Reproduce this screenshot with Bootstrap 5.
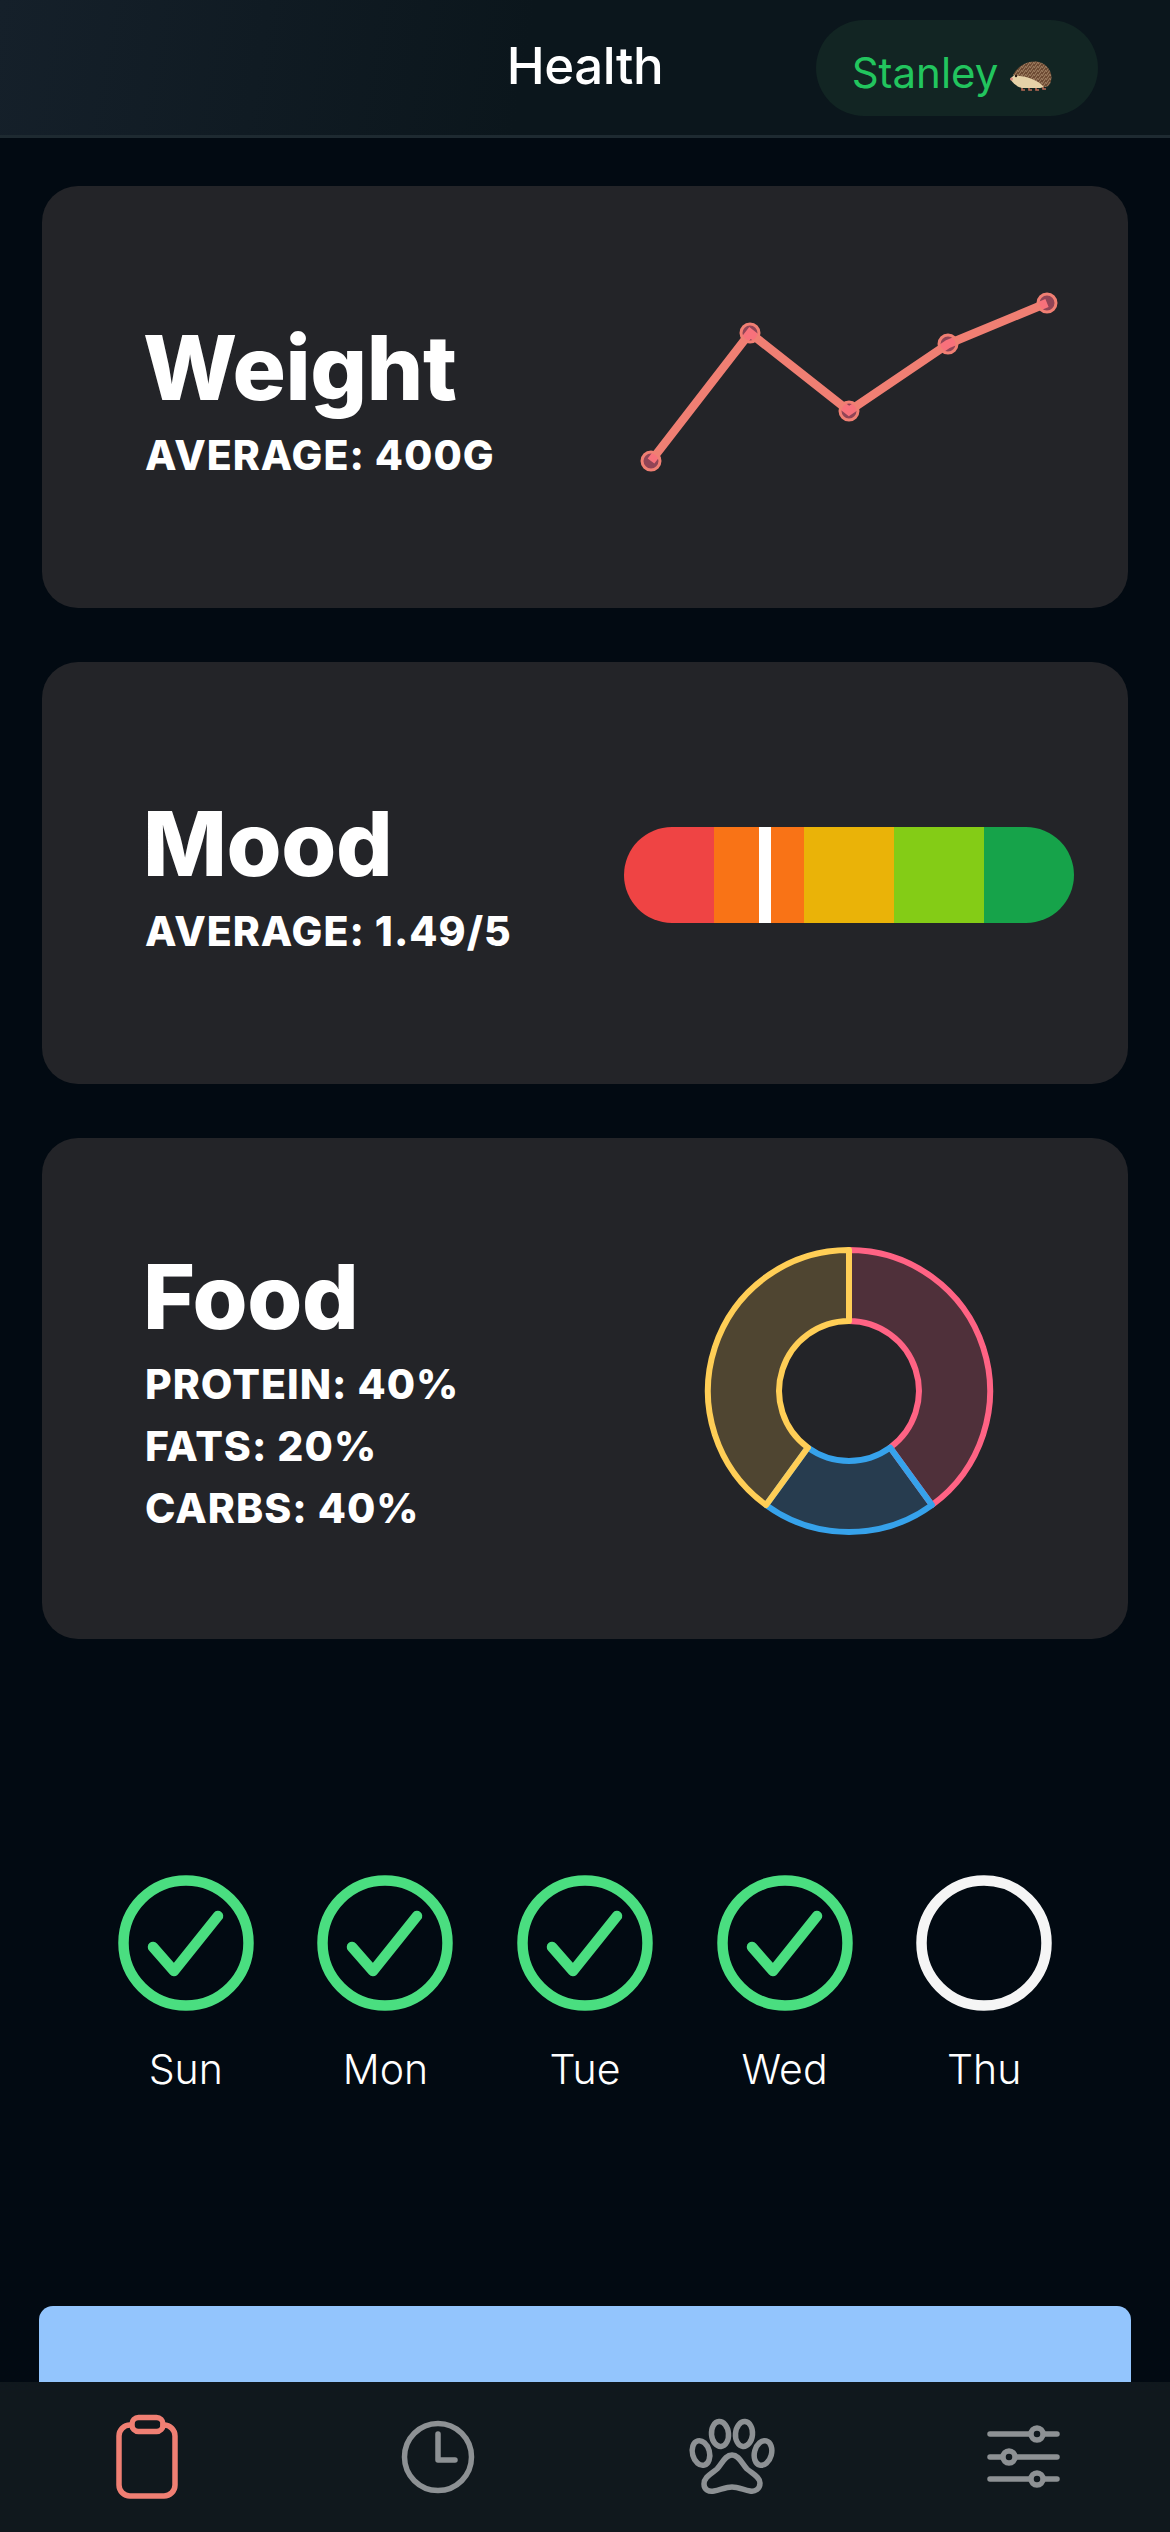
<!DOCTYPE html>
<html lang="en">
<head>
    <meta charset="UTF-8">
    <meta name="viewport" content="width=device-width, initial-scale=1.0">
    <title>Health</title>
    <link href="https://cdn.jsdelivr.net/npm/bootstrap@5.3.0/dist/css/bootstrap.min.css" rel="stylesheet">
    <style>
        html, body {
            height: 100%;
        }
        body {
            background-color: #020a12;
            color: #fff;
            font-family: Inter, "Liberation Sans", sans-serif;
        }
        .app-screen {
            height: 2532px;
            overflow: hidden;
        }
        .top-bar {
            display: grid;
            grid-template-columns: 1fr auto 1fr;
            align-items: center;
            height: 138px;
            padding-bottom: 7px;
            background: linear-gradient(100deg, #15202a 0%, #0b161c 45%, #0b161c 100%);
            border-bottom: 3px solid #1e2a31;
        }
        .top-title {
            grid-column: 2;
            font-size: 51px;
            font-weight: 500;
            line-height: 1;
            letter-spacing: -0.4px;
            margin-top: 2px;
        }
        .pet-pill {
            grid-column: 3;
            justify-self: end;
            width: 282px;
            height: 96px;
            margin-right: 72px;
            margin-top: 7px;
            padding-right: 10px;
            background-color: #122523;
            color: #22c55e;
            font-size: 42px;
            border-radius: 48px;
        }
        .pet-name {
            position: relative;
            top: 5px;
        }
        .stat-list {
            padding: 48px 42px 0;
        }
        .stat-card {
            background-color: #232428;
            border: 0;
            border-radius: 36px;
            height: 422px;
            padding-left: 103px;
            color: #fff;
        }
        .stat-card + .stat-card {
            margin-top: 54px;
        }
        .stat-card.stat-tall {
            height: 501px;
        }
        .stat-title {
            font-size: 89px;
            font-weight: 800;
            line-height: 97px;
            letter-spacing: -0.4px;
            margin: 10px 0 8px -2px;
        }
        .stat-line {
            font-size: 41px;
            font-weight: 800;
            line-height: 62px;
            text-transform: uppercase;
            letter-spacing: 1px;
        }
        .chart-box {
            width: 450px;
            margin-top: 4px;
            margin-right: 54px;
            flex-shrink: 0;
        }
        .chart-box svg {
            display: block;
        }
        .mood-scale {
            height: 96px;
            border-radius: 48px;
            overflow: hidden;
            position: relative;
        }
        .mood-step {
            flex: 1 1 0;
        }
        .mood-1 { background-color: #ef4444; }
        .mood-2 { background-color: #f97316; }
        .mood-3 { background-color: #eab308; }
        .mood-4 { background-color: #84cc16; }
        .mood-5 { background-color: #16a34a; }
        .mood-pointer {
            position: absolute;
            top: 0;
            bottom: 0;
            width: 12px;
            background-color: #fff;
        }
        .day-row {
            margin-top: 236px;
            padding: 0 86px;
        }
        .day-col {
            flex: 1 1 0;
            font-size: 41px;
            font-weight: 300;
            line-height: 1;
        }
        .day-col svg {
            display: block;
            margin-bottom: 38px;
        }
        .log-button {
            display: block;
            width: 1092px;
            height: 120px;
            margin: 216px 0 0 39px;
            background-color: #93c5fd;
            border: 0;
            border-radius: 14px;
        }
        .main-area {
            height: 2244px;
            overflow: hidden;
        }
        .tab-bar {
            height: 150px;
            background-color: #10181d;
            position: relative;
        }
        .tab-icon {
            position: absolute;
            top: 0;
        }
    </style>
</head>
<body>
    <div class="app-screen d-flex flex-column">
        <header class="top-bar">
            <div class="top-title">Health</div>
            <div class="pet-pill d-flex align-items-center justify-content-center gap-2">
                <span class="pet-name">Stanley</span>
                <!-- erizo -->
                <svg class="ms-1 mt-3" width="42" height="30" viewBox="0 0 42 30">
                    <defs>
                        <pattern id="spines" width="4" height="4" patternUnits="userSpaceOnUse">
                            <rect width="4" height="4" fill="#6d4a33"/>
                            <path d="M0 3 L2 0 M2 4 L4 1" stroke="#a98a6c" stroke-width="0.9"/>
                        </pattern>
                    </defs>
                    <path d="M12 26 v3 h3 M19 26 v3 h3 M26 26 v3 h3 M33 25 v3 h3" stroke="#b86b55" stroke-width="1.6" fill="none"/>
                    <path d="M1 17 C6 12 10 8 14 9 L34 14 C38 20 36 26 30 27 H12 C7 26 3 22 1 19 Z" fill="#e6d2a8"/>
                    <path d="M3 14 C9 3 20 -1 29 1 C39 4 43 13 41 20 C40 25 37 26 34 26 C28 19 16 15 9 15 Z" fill="url(#spines)"/>
                    <circle cx="6" cy="15" r="1.2" fill="#2a1a12"/>
                    <circle cx="1.5" cy="18" r="1.5" fill="#d98a80"/>
                </svg>
            </div>
        </header>

        <div class="main-area">
            <section class="stat-list">
                <div class="card stat-card flex-row align-items-center justify-content-between">
                    <div>
                        <h2 class="stat-title">Weight</h2>
                        <div class="stat-line">Average: 400g</div>
                    </div>
                    <div class="chart-box">
                        <svg width="450" height="220" viewBox="624 291 450 220">
                            <polyline points="651,463 750,335 849,413 948,346 1047,305" fill="none" stroke="#f07f73" stroke-width="8.5"/>
                            <g fill="rgba(255,99,132,.5)" stroke="#f07f73" stroke-width="3">
                                <circle cx="651" cy="463" r="9"/>
                                <circle cx="750" cy="335" r="9"/>
                                <circle cx="849" cy="413" r="9"/>
                                <circle cx="948" cy="346" r="9"/>
                                <circle cx="1047" cy="305" r="9"/>
                            </g>
                        </svg>
                    </div>
                </div>

                <div class="card stat-card flex-row align-items-center justify-content-between">
                    <div>
                        <h2 class="stat-title">Mood</h2>
                        <div class="stat-line">Average: 1.49/5</div>
                    </div>
                    <div class="chart-box">
                        <div class="mood-scale d-flex">
                            <div class="mood-step mood-1"></div>
                            <div class="mood-step mood-2"></div>
                            <div class="mood-step mood-3"></div>
                            <div class="mood-step mood-4"></div>
                            <div class="mood-step mood-5"></div>
                            <div class="mood-pointer" style="left: 135px"></div>
                        </div>
                    </div>
                </div>

                <div class="card stat-card stat-tall flex-row align-items-center justify-content-between">
                    <div>
                        <h2 class="stat-title">Food</h2>
                        <div class="stat-line">Protein: 40%</div>
                        <div class="stat-line">Fats: 20%</div>
                        <div class="stat-line">Carbs: 40%</div>
                    </div>
                    <div class="chart-box">
                        <svg class="mx-auto" width="300" height="300" viewBox="-150 -150 300 300" stroke-width="6" stroke-linejoin="round">
                            <path d="M0 -141 A141 141 0 0 1 82.9 114.1 L41.1 56.6 A70 70 0 0 0 0 -70 Z" fill="rgba(255,99,132,.2)" stroke="#ff6384"/>
                            <path d="M82.9 114.1 A141 141 0 0 1 -82.9 114.1 L-41.1 56.6 A70 70 0 0 0 41.1 56.6 Z" fill="rgba(54,162,235,.2)" stroke="#36a2eb"/>
                            <path d="M-82.9 114.1 A141 141 0 0 1 0 -141 L0 -70 A70 70 0 0 0 -41.1 56.6 Z" fill="rgba(255,206,86,.2)" stroke="#ffce56"/>
                        </svg>
                    </div>
                </div>
            </section>

            <section class="day-row d-flex">
                <div class="day-col d-flex flex-column align-items-center">
                    <svg width="136" height="136" viewBox="-68 -68 136 136" fill="none" stroke="#4ade80" stroke-width="10.5" stroke-linecap="round" stroke-linejoin="round"><circle r="62.5"/><path d="M-33 4 L-12 28 L32 -27"/></svg>
                    <span>Sun</span>
                </div>
                <div class="day-col d-flex flex-column align-items-center">
                    <svg width="136" height="136" viewBox="-68 -68 136 136" fill="none" stroke="#4ade80" stroke-width="10.5" stroke-linecap="round" stroke-linejoin="round"><circle r="62.5"/><path d="M-33 4 L-12 28 L32 -27"/></svg>
                    <span>Mon</span>
                </div>
                <div class="day-col d-flex flex-column align-items-center">
                    <svg width="136" height="136" viewBox="-68 -68 136 136" fill="none" stroke="#4ade80" stroke-width="10.5" stroke-linecap="round" stroke-linejoin="round"><circle r="62.5"/><path d="M-33 4 L-12 28 L32 -27"/></svg>
                    <span>Tue</span>
                </div>
                <div class="day-col d-flex flex-column align-items-center">
                    <svg width="136" height="136" viewBox="-68 -68 136 136" fill="none" stroke="#4ade80" stroke-width="10.5" stroke-linecap="round" stroke-linejoin="round"><circle r="62.5"/><path d="M-33 4 L-12 28 L32 -27"/></svg>
                    <span>Wed</span>
                </div>
                <div class="day-col d-flex flex-column align-items-center">
                    <svg width="136" height="136" viewBox="-68 -68 136 136" fill="none" stroke="#f5f5f5" stroke-width="10.5"><circle r="62.5"/></svg>
                    <span>Thu</span>
                </div>
            </section>

            <button class="log-button" type="button" aria-label="Log"></button>
        </div>

        <nav class="tab-bar">
            <svg class="tab-icon start-0" width="1170" height="150" viewBox="0 2382 1170 150" fill="none" stroke-width="5.5" stroke-linecap="round" stroke-linejoin="round">
                <!-- portapapeles -->
                <g stroke="#f07f73">
                    <path d="M131 2425 H130 A11 11 0 0 0 119 2436 V2485 A11 11 0 0 0 130 2496 H164 A11 11 0 0 0 175 2485 V2436 A11 11 0 0 0 164 2425 H163"/>
                    <rect x="132" y="2417.500" width="31" height="14" rx="6.500"/>
                </g>
                <g stroke="#8d9194">
                    <!-- reloj -->
                    <circle cx="438" cy="2457" r="33.500"/>
                    <path d="M438 2434 V2460 H455"/>
                    <!-- huella -->
                    <ellipse cx="701" cy="2453" rx="8.500" ry="12.500" transform="rotate(-15 701 2453)"/>
                    <ellipse cx="720" cy="2434" rx="8.500" ry="12.500" transform="rotate(-5 720 2434)"/>
                    <ellipse cx="744" cy="2434" rx="8.500" ry="12.500" transform="rotate(5 744 2434)"/>
                    <ellipse cx="763" cy="2453" rx="8.500" ry="12.500" transform="rotate(15 763 2453)"/>
                    <path d="M732 2455 C725 2455 722 2464 717 2469 C711 2474 704 2477 704 2484 C704 2490 709 2492 714 2491 C720 2490 726 2487 732 2487 C738 2487 744 2490 750 2491 C755 2492 760 2489 760 2483 C760 2477 753 2474 747 2469 C742 2464 739 2455 732 2455 Z"/>
                    <!-- ajustes -->
                    <path d="M990 2434 H1029 M1045 2434 H1057 M990 2457 H1001 M1017 2457 H1057 M990 2479 H1029 M1045 2479 H1057"/>
                    <circle cx="1037" cy="2434" r="6"/>
                    <circle cx="1009" cy="2457" r="6"/>
                    <circle cx="1037" cy="2479" r="6"/>
                </g>
            </svg>
        </nav>
    </div>
    <script src="https://cdn.jsdelivr.net/npm/bootstrap@5.3.0/dist/js/bootstrap.bundle.min.js"></script>
</body>
</html>
